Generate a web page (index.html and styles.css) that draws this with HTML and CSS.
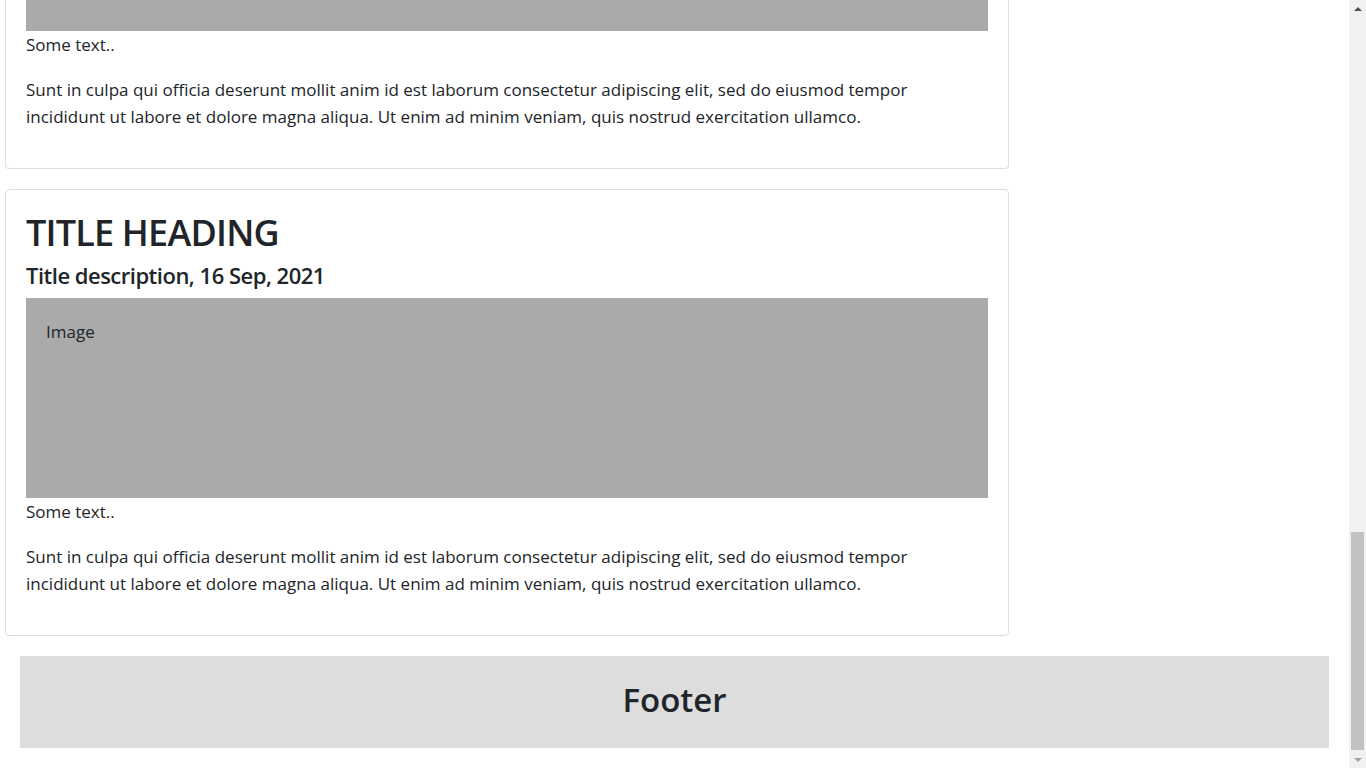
FILE: index.html
```html
<!DOCTYPE html>
<html lang="en">
<head>
    <meta charset="UTF-8">
    <meta name="viewport" content="width=device-width, initial-scale=1.0">
    <title>Blog</title>
    <link rel="stylesheet" href="styles.css">
</head>
<body>
    <div class="window">
        <div class="page">
            <div class="row">
                <div class="leftcolumn">
                    <div class="card card-cut">
                        <div class="fakeimg fakeimg-cut"></div>
                        <p>Some text..</p>
                        <p>Sunt in culpa qui officia deserunt mollit anim id est laborum consectetur adipiscing elit, sed do eiusmod tempor incididunt ut labore et dolore magna aliqua. Ut enim ad minim veniam, quis nostrud exercitation ullamco.</p>
                    </div>
                    <div class="card">
                        <h2>TITLE HEADING</h2>
                        <h5>Title description, 16 Sep, 2021</h5>
                        <div class="fakeimg">Image</div>
                        <p>Some text..</p>
                        <p>Sunt in culpa qui officia deserunt mollit anim id est laborum consectetur adipiscing elit, sed do eiusmod tempor incididunt ut labore et dolore magna aliqua. Ut enim ad minim veniam, quis nostrud exercitation ullamco.</p>
                    </div>
                </div>
                <div class="rightcolumn"></div>
            </div>
            <div class="footer">
                <h2>Footer</h2>
            </div>
        </div>

        <div class="scrollbar">
            <div class="scroll-btn"><span class="arrow-up"></span></div>
            <div class="scroll-track">
                <div class="scroll-thumb"></div>
            </div>
            <div class="scroll-btn"><span class="arrow-down"></span></div>
        </div>
    </div>
</body>
</html>
```

FILE: styles.css
```css
* {
    margin: 0;
    padding: 0;
    box-sizing: border-box;
}

html, body {
    height: 100%;
    overflow: hidden;
}

body {
    font-family: "Open Sans", "Noto Sans", sans-serif;
    font-size: 17px;
    line-height: 27px;
    color: #212529;
    background-color: #fff;
}

.window {
    display: flex;
    height: 768px;
}

.page {
    flex: 1;
    display: flex;
    flex-direction: column;
}

.row {
    display: flex;
}

.leftcolumn {
    flex: 0 0 1004px;
    margin-left: 5px;
    display: flex;
    flex-direction: column;
    gap: 20px;
}

.rightcolumn {
    flex: 1;
}

.card {
    border: 1px solid #dfdfdf;
    border-radius: 4px;
    padding: 20px;
}

.card-cut {
    border-top: none;
    border-top-left-radius: 0;
    border-top-right-radius: 0;
    padding-top: 0;
}

.card h2 {
    font-size: 36px;
    font-weight: 600;
    letter-spacing: -0.8px;
    line-height: 46px;
    margin-bottom: 5px;
}

.card h5 {
    font-size: 22px;
    font-weight: 600;
    letter-spacing: -0.5px;
    line-height: 29px;
    margin-bottom: 8px;
}

.card p {
    margin-bottom: 18px;
}

.fakeimg {
    height: 200px;
    background-color: #aaa;
    padding: 20px;
}

.fakeimg-cut {
    height: 31px;
    padding: 0;
}

.footer {
    margin: 20px 20px 0;
    height: 92px;
    padding-bottom: 6px;
    background-color: #ddd;
    display: flex;
    align-items: center;
    justify-content: center;
}

.footer h2 {
    font-size: 33px;
    font-weight: 600;
}

/* window scrollbar, thumb parked at the bottom */
.scrollbar {
    flex: 0 0 17px;
    background-color: #f1f1f1;
    display: flex;
    flex-direction: column;
}

.scroll-btn {
    height: 17px;
    display: flex;
    align-items: center;
    justify-content: center;
}

.arrow-up {
    border-left: 4px solid transparent;
    border-right: 4px solid transparent;
    border-bottom: 4px solid #505050;
}

.arrow-down {
    border-left: 4px solid transparent;
    border-right: 4px solid transparent;
    border-top: 4px solid #a3a3a3;
}

.scroll-track {
    flex: 1;
    display: flex;
    flex-direction: column;
    justify-content: flex-end;
    padding: 0 2px 1px;
}

.scroll-thumb {
    height: 218px;
    background-color: #c1c1c1;
}
```
